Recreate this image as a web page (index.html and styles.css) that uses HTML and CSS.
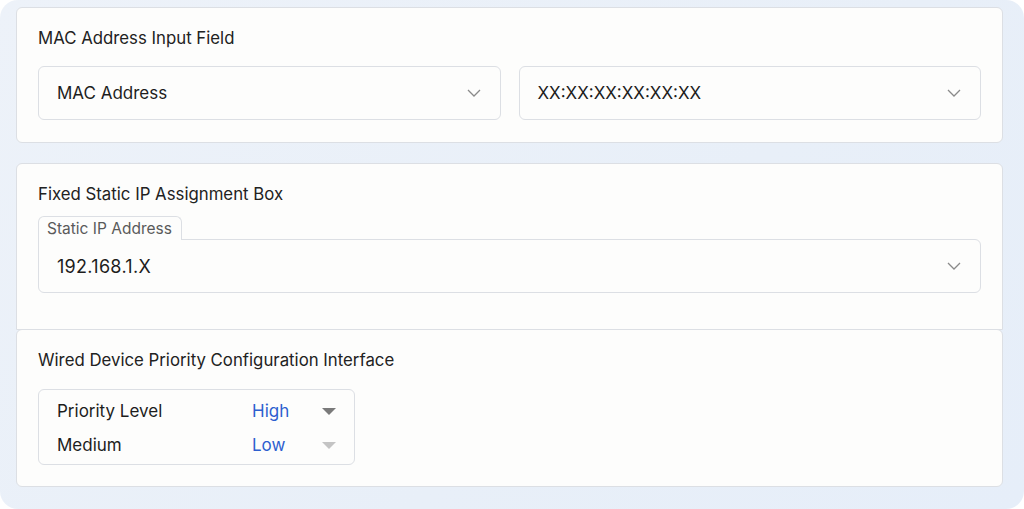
FILE: index.html
```html
<!DOCTYPE html>
<html lang="en">
<head>
<meta charset="utf-8">
<title>Wired Settings</title>
<link rel="stylesheet" href="styles.css">
</head>
<body>
<div class="frame">
  <section class="card card-mac">
    <h2 class="card-title">MAC Address Input Field</h2>
    <div class="row-2">
      <div class="select">
        <span class="select-text">MAC Address</span>
        <svg class="chev" viewBox="0 0 14 8" width="14" height="8"><path d="M1 1 L7 7 L13 1" fill="none" stroke="#8a8a8a" stroke-width="1.3"/></svg>
      </div>
      <div class="select">
        <span class="select-text">XX:XX:XX:XX:XX:XX</span>
        <svg class="chev" viewBox="0 0 14 8" width="14" height="8"><path d="M1 1 L7 7 L13 1" fill="none" stroke="#8a8a8a" stroke-width="1.3"/></svg>
      </div>
    </div>
  </section>

  <section class="card card-ip">
    <h2 class="card-title">Fixed Static IP Assignment Box</h2>
    <div class="field">
      <span class="tab">Static IP Address</span>
      <div class="select select-ip">
        <span class="select-text ip-text">192.168.1.X</span>
        <svg class="chev" viewBox="0 0 14 8" width="14" height="8"><path d="M1 1 L7 7 L13 1" fill="none" stroke="#8a8a8a" stroke-width="1.3"/></svg>
      </div>
    </div>
  </section>

  <section class="card card-prio">
    <h2 class="card-title">Wired Device Priority Configuration Interface</h2>
    <div class="prio-box">
      <div class="prio-row">
        <span class="prio-label">Priority Level</span>
        <span class="prio-value">High</span>
        <span class="tri tri-dark"></span>
      </div>
      <div class="prio-row">
        <span class="prio-label">Medium</span>
        <span class="prio-value">Low</span>
        <span class="tri tri-light"></span>
      </div>
    </div>
  </section>
</div>
</body>
</html>
```

FILE: styles.css
```css
* { box-sizing: border-box; }
html, body { margin: 0; padding: 0; background: #ffffff; }
body {
  font-family: Inter, "Noto Sans", "Liberation Sans", sans-serif;
  color: #1f1f1f;
}
.frame {
  width: 1024px;
  height: 509px;
  background: linear-gradient(135deg, #edf2f9 0%, #e8eff8 60%, #e6eef9 100%);
  border-radius: 18px;
  padding: 7px 21px 22px 16px;
  display: flex;
  flex-direction: column;
}
.card {
  background: #fdfdfc;
  border: 1px solid #dcdfe4;
  border-radius: 6px;
  padding: 19px 21px 0 21px;
}
.card-title {
  margin: 0;
  font-size: 16.8px;
  font-weight: 400;
  line-height: 22px;
  color: #222;
}
.card-mac { height: 136px; }
.card-ip { height: 167px; margin-top: 20px; border-bottom-left-radius: 0; border-bottom-right-radius: 0; }
.card-prio { height: 158px; margin-top: -1px; padding-top: 19px; }

.row-2 {
  display: flex;
  gap: 18px;
  margin-top: 17px;
}
.select {
  flex: 1;
  height: 54px;
  border: 1px solid #dcdfe4;
  border-radius: 6px;
  background: #fdfdfc;
  display: flex;
  align-items: center;
  justify-content: space-between;
  padding: 0 19px 0 18px;
}
.select-text {
  font-size: 17px;
  color: #1d1d1d;
}
.ip-text { font-size: 18px; letter-spacing: 0.3px; }
.chev { display: block; }

.field {
  margin-top: 11px;
  display: flex;
  flex-direction: column;
  align-items: flex-start;
}
.tab {
  height: 24px;
  width: 144px;
  border: 1px solid #dcdfe4;
  border-bottom: none;
  border-radius: 6px 6px 0 0;
  padding: 1px 0 0 8px;
  font-size: 15.5px;
  line-height: 22px;
  color: #5a5a5a;
  background: #fdfdfc;
  position: relative;
  z-index: 1;
  margin-bottom: -1px;
}
.select-ip { width: 100%; flex: none; border-top-left-radius: 0; }

.prio-box {
  margin-top: 18px;
  width: 317px;
  height: 76px;
  border: 1px solid #dcdfe4;
  border-radius: 6px;
  padding: 4px 0 0 18px;
}
.prio-row {
  display: flex;
  align-items: center;
  height: 34px;
}
.prio-label {
  width: 195px;
  font-size: 17px;
  color: #1d1d1d;
}
.prio-value {
  width: 70px;
  font-size: 17px;
  color: #2d5fcf;
}
.tri {
  width: 0;
  height: 0;
  border-left: 7px solid transparent;
  border-right: 7px solid transparent;
  border-top: 7px solid #7a7a7a;
}
.tri-light { border-top-color: #c4c4c4; }
```
